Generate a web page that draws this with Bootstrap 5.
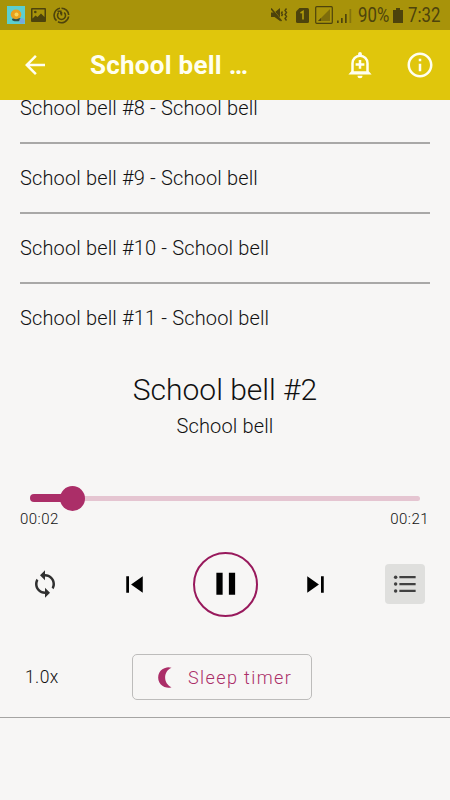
<!DOCTYPE html>
<html lang="en">
<head>
<meta charset="utf-8">
<meta name="viewport" content="width=device-width, initial-scale=1">
<title>School bell</title>
<link href="https://cdn.jsdelivr.net/npm/bootstrap@5.3.0/dist/css/bootstrap.min.css" rel="stylesheet">
<style>
body{width:450px;height:800px;overflow:hidden;background:#f7f6f5;color:#111;font-family:Roboto,"Liberation Sans",sans-serif;font-weight:300}
svg{display:block;flex:none}
.status-strip{height:30px;background:#a8930a;color:#4d430c;padding:0 11px 0 7px;font-size:20px;font-weight:400}
.status-strip .txt{transform:scaleX(.84);transform-origin:0 50%;white-space:nowrap;line-height:30px}
.gap-s{margin-left:6px}
.app-bar{height:70px;background:#e0c60c;color:#fffff0;padding:0 15px 0 20px}
.app-title{font-size:26px;font-weight:700;line-height:30px;letter-spacing:.25px;margin:-1px 0 0 40px}
.info-icon{margin-left:30px}
.tracks{height:240px;padding:0 20px}
.track{height:70px;flex:none;border-bottom:2px solid #a9a8a7;font-size:20px;line-height:69px;letter-spacing:.15px;white-space:nowrap}
.track:first-child{margin-top:-26px}
.track:last-child{border:0}
.now-title{font-size:30px;line-height:36px;margin-top:32px}
.now-artist{font-size:20px;line-height:24px;letter-spacing:.15px;margin-top:6px}
.seek{height:26px;margin:47px 30px 0}
.seek-done{width:42px;height:8px;border-radius:4px 0 0 4px;background:#ab2e68}
.seek-knob{width:25px;height:25px;border-radius:50%;background:#ab2e68;margin:0 -12.5px;z-index:1}
.seek-rest{height:5px;border-radius:0 3px 3px 0;background:#e5c5d1}
.times{padding:0 21px 0 20px;font-size:15px;line-height:18px;letter-spacing:.45px;margin-top:-1px}
.controls{height:70px;margin-top:21px;padding:0 25px 0 30px}
.prev-icon{margin-left:58px}
.pause-btn{width:65px;height:65px;border:2.5px solid #98195c;border-radius:50%;margin:0 41px 0 42px}
.list-btn{width:40px;height:40px;background:#dfdfdd;border-radius:4px}
.extras{height:99px;border-bottom:1px solid #a5a4a3;padding-left:25px;padding-top:35px}
.rate{width:107px;font-size:17.5px;line-height:46px;letter-spacing:.4px}
.sleep-btn{width:180px;height:46px;border:1px solid #bdbcbb;border-radius:5px;color:#ab2e68;font-size:18px;letter-spacing:1.4px;padding-left:25px}
.sleep-btn span{margin-left:15px}
</style>
<script src="https://cdn.jsdelivr.net/npm/bootstrap@5.3.0/dist/js/bootstrap.bundle.min.js"></script>
</head>
<body>
<div class="status-strip d-flex align-items-center">
  <svg width="18" height="18"><path fill="#5ccfcf" d="M0 0h18v18H0z"/><ellipse cx="9.500" cy="13.500" rx="4.500" ry="1.800" fill="#31504a"/><ellipse cx="9" cy="8.400" rx="5.300" ry="4.800" fill="#eaa01d"/><circle cx="9.500" cy="8.400" r="2" fill="#f6d65d"/><circle cx="15" cy="15" r="2.700" fill="#78a8df"/></svg>
  <svg class="gap-s" width="15" height="14" fill="currentColor"><path fill-rule="evenodd" d="M1 0h13a1 1 0 0 1 1 1v12a1 1 0 0 1-1 1H1a1 1 0 0 1-1-1V1A1 1 0 0 1 1 0zM1.500 1.500v9l3-3 2 1.500 3.500-3.500 3.500 3.500v-7.500zM3 4a1.300 1.300 0 1 0 2.600 0A1.300 1.300 0 0 0 3 4z"/></svg>
  <svg class="gap-s" style="margin-left:7px" width="17" height="17" viewBox="0 0 17 17" fill="none" stroke="currentColor" stroke-width="1.600"><path d="M7 1.300A7.200 7.200 0 0 0 3.500 13.700M5 14.800A7.200 7.200 0 0 0 15.600 9.500M15.700 8A7.200 7.200 0 0 0 8.500 1.200M5.800 5.500a4 4 0 1 0 5.400 0M8.500 8.500V5"/><path d="M4.500 4.300h3.300v3"/></svg>
  <svg class="ms-auto" width="17" height="16" viewBox="0 0 17 16" fill="none" stroke="currentColor"><path fill="currentColor" stroke="none" d="M0 5.500h3.500L9 1v13L3.500 10H0z"/><path d="M.5 1l11 13" stroke="#a8930a" stroke-width="1"/><path d="M0 1.500l10.500 12.500" stroke-width="1.500"/><path d="M11.500 4.500l-1 1.500 1 1.500-1 1.500M15.500 1.500l-1.500 2 1.500 2-1.500 2 1.500 2-1.500 2 1.500 2" stroke-width="1.400"/></svg>
  <svg class="ms-2" width="13" height="15"><path fill="currentColor" d="M3.500 0H11.500a1.500 1.500 0 0 1 1.500 1.500v12a1.500 1.500 0 0 1-1.500 1.500h-10A1.500 1.500 0 0 1 0 13.500V3.500z"/><path d="M4.500 5l2.500-1.500V11.500" fill="none" stroke="#b29d0c" stroke-width="1.600"/></svg>
  <svg class="gap-s" width="18" height="18"><rect x=".7" y=".7" width="16.600" height="16.600" rx="1" fill="none" stroke="currentColor" stroke-width="1.200"/><path fill="#7e6d0b" d="M15 3v12H3z"/><path fill="currentColor" d="M6 12v3H3z"/></svg>
  <svg class="ms-1" width="15" height="15" fill="currentColor"><path d="M0 12.500h1.700V15H0zM4 10h1.700v5H4zM8 6h1.700v9H8z"/><path opacity=".4" d="M12.500 1h1.700v14h-1.700z"/></svg>
  <span class="txt gap-s" style="width:35px">90%</span>
  <svg width="10" height="15"><path fill="currentColor" d="M3 0h4v2h3v13H0V2h3z"/></svg>
  <span class="txt" style="width:31px;margin-left:5px">7:32</span>
</div>
<nav class="app-bar d-flex align-items-center">
  <svg width="30" height="30" viewBox="0 0 24 24" fill="currentColor"><path d="M20 11H7.830l5.590-5.590L12 4l-8 8 8 8 1.410-1.410L7.830 13H20z"/></svg>
  <div class="app-title">School bell …</div>
  <svg class="ms-auto" width="30" height="30" viewBox="0 0 24 24" fill="none" stroke="currentColor" stroke-width="2"><path d="M6 18v-7.500a6 6 0 0 1 12 0V18M12 8v7M8.500 11.500h7"/><path fill="currentColor" stroke="none" d="M10.500 5V3a1.500 1.500 0 0 1 3 0v2zM10 20.500h4a2 2 0 0 1-4 0zM5 17h14l2.300 2.500H2.700z"/></svg>
  <svg class="info-icon" width="30" height="30" viewBox="0 0 24 24" fill="currentColor"><path d="M11 7h2v2h-2zm0 4h2v6h-2zm1-9C6.480 2 2 6.480 2 12s4.480 10 10 10 10-4.480 10-10S17.520 2 12 2zm0 18c-4.410 0-8-3.590-8-8s3.590-8 8-8 8 3.590 8 8-3.590 8-8 8z"/></svg>
</nav>
<main>
  <div class="tracks d-flex flex-column overflow-hidden">
    <div class="track">School bell #8 - School bell</div>
    <div class="track">School bell #9 - School bell</div>
    <div class="track">School bell #10 - School bell</div>
    <div class="track">School bell #11 - School bell</div>
  </div>
  <div class="now-title text-center">School bell #2</div>
  <div class="now-artist text-center">School bell</div>
  <div class="seek d-flex align-items-center">
    <div class="seek-done"></div><div class="seek-knob"></div><div class="seek-rest flex-fill"></div>
  </div>
  <div class="times d-flex justify-content-between"><span>00:02</span><span>00:21</span></div>
  <div class="controls d-flex align-items-center">
    <svg width="30" height="30" viewBox="0 0 24 24" fill="#303030"><path d="M12 4V1L8 5l4 4V6c3.310 0 6 2.690 6 6 0 1.010-.25 1.970-.7 2.800l1.460 1.460C19.540 15.030 20 13.570 20 12c0-4.420-3.580-8-8-8zm0 14c-3.310 0-6-2.690-6-6 0-1.010.25-1.970.7-2.800L5.240 7.740C4.460 8.970 4 10.430 4 12c0 4.420 3.580 8 8 8v3l4-4-4-4v3z"/></svg>
    <svg class="prev-icon" width="33" height="33" viewBox="0 0 24 24"><path d="M6 6h2v12H6zm3.500 6l8.500 6V6z"/></svg>
    <div class="pause-btn d-flex align-items-center justify-content-center"><svg width="37.500" height="37.500" viewBox="0 0 24 24"><path d="M6 19h4V5H6v14zm8-14v14h4V5h-4z"/></svg></div>
    <svg width="33" height="33" viewBox="0 0 24 24"><path d="M6 18l8.500-6L6 6v12zM16 6v12h2V6h-2z"/></svg>
    <div class="list-btn ms-auto d-flex align-items-center justify-content-center"><svg width="30" height="30" viewBox="0 0 24 24" fill="#404040"><circle cx="4.500" cy="6.500" r="1.400"/><circle cx="4.500" cy="12" r="1.400"/><circle cx="4.500" cy="17.500" r="1.400"/><path d="M7.500 5.600H20.500v1.800H7.500zM7.500 11.100H20.500v1.800H7.500zM7.500 16.600H20.500v1.800H7.500z"/></svg></div>
  </div>
  <div class="extras d-flex align-items-start">
    <div class="rate">1.0x</div>
    <div class="sleep-btn d-flex align-items-center">
      <svg width="15" height="21"><path fill="#ab2e68" d="M13.500 .8A10.200 10.200 0 1 0 13.500 20.200C5 16.500 5 4.500 13.500 .8z"/></svg>
      <span>Sleep timer</span>
    </div>
  </div>
</main>
</body>
</html>
